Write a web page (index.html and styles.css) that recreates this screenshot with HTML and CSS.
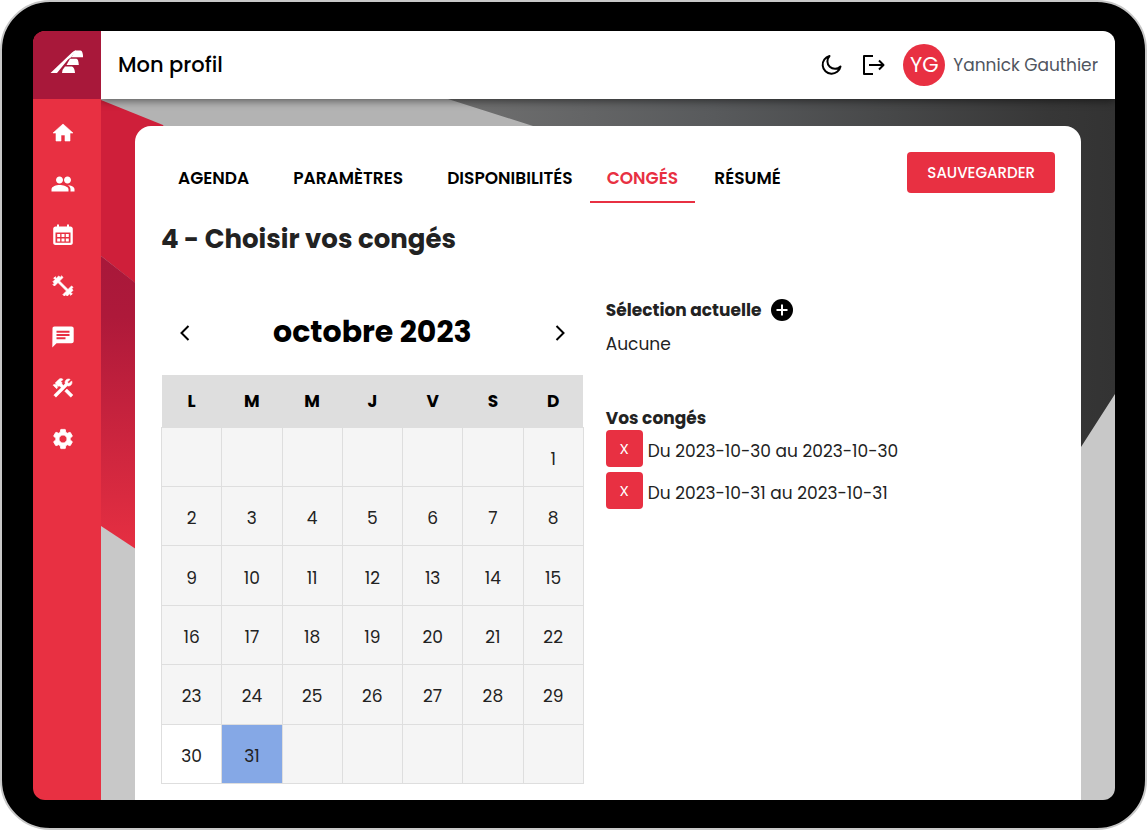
FILE: index.html
```html
<!DOCTYPE html>
<html lang="fr">
<head>
  <meta charset="UTF-8">
  <meta name="viewport" content="width=device-width, initial-scale=1.0">
  <title>Mon profil</title>
  <link rel="stylesheet" href="styles.css">
</head>
<body>
  <div class="tablet">
    <div class="screen">
      <nav class="sidebar" aria-label="Navigation">
        <a href="#" class="logo" aria-label="Accueil">
          <svg width="34" height="26" viewBox="0 0 34 26" fill="#fff">
            <path d="M0.500 24 L22 3.500 Q24 1.500 26 1.500 L21.500 8 L18 10.500 L7 24 Z"/>
            <path d="M25 1.500 H30.500 Q33 2 33 8.300 H21.500 Z"/>
            <path d="M20 9.700 H26.500 Q28.500 10.200 28.800 16 H16.500 Z"/>
            <path d="M15 17.400 H22 Q24.500 18 25 24 H12 Q12 20.500 15 17.400 Z"/>
          </svg>
        </a>
        <a href="#" class="nav-link" aria-label="Tableau de bord">
          <svg viewBox="0 0 24 24"><path d="M10 20v-6h4v6h5v-8h3L12 3 2 12h3v8z" stroke="#fff" stroke-width="0.600"/></svg>
        </a>
        <a href="#" class="nav-link" aria-label="Clients">
          <svg viewBox="0 0 24 24"><path d="M16.500 13.100C18.300 14.200 19.500 15.500 19.500 17.200V19.500H23.500V17.200c0-2.400-4-3.800-7-4.100zM8.500 11.500c2 0 3.500-1.600 3.500-3.500s-1.500-3.500-3.500-3.500S5 6.100 5 8s1.500 3.500 3.500 3.500zM16.500 11.500c2 0 3.500-1.600 3.500-3.500s-1.500-3.500-3.500-3.500S13 6.100 13 8s1.500 3.500 3.500 3.500zM8.500 13C5.500 13 .5 14.400.5 17.200v2.300H17.500v-2.300C17.500 14.400 11.500 13 8.500 13z"/></svg>
        </a>
        <a href="#" class="nav-link" aria-label="Calendrier">
          <svg viewBox="0 0 24 24"><path fill-rule="evenodd" d="M6 1.500h2V3.500h8V1.500h2V3.500h1.500c1.300 0 2.300 1 2.300 2.300v14c0 1.300-1 2.300-2.300 2.300h-15c-1.300 0-2.300-1-2.300-2.300v-14c0-1.300 1-2.300 2.300-2.300H6zM4.500 9.500v10.300h15V9.500z"/><path d="M6.200 11h3v3h-3zM10.500 11h3v3h-3zM14.800 11h3v3h-3zM6.200 15.600h3v3h-3zM10.500 15.600h3v3h-3zM14.800 15.600h3v3h-3z"/></svg>
        </a>
        <a href="#" class="nav-link" aria-label="Entraînements">
          <svg viewBox="0 0 24 24"><path d="M20.570 14.860L22 13.430 20.570 12 17 15.570 8.430 7 12 3.430 10.570 2 9.140 3.430 7.710 2 5.570 4.140 4.140 2.710 2.710 4.140l1.430 1.430L2 7.710l1.430 1.430L2 10.570 3.430 12 7 8.430 15.570 17 12 20.570 13.430 22l1.430-1.430L16.290 22l2.140-2.140 1.430 1.430 1.430-1.430-1.430-1.430L22 16.290z" stroke="#fff" stroke-width="0.900" stroke-linejoin="round"/></svg>
        </a>
        <a href="#" class="nav-link" aria-label="Messages">
          <svg viewBox="0 0 24 24"><path d="M20.500 1.500h-17c-1.300 0-2 .9-2 2L1.300 22.500l4.200-4.200h15c1.300 0 2.200-.9 2.200-2V3.500c0-1.100-.9-2-2.200-2zM5.500 9h13v2H5.500V9zm9 5.200h-9v-2h9v2zm4-6.400H5.500V5.800h13v2z"/></svg>
        </a>
        <a href="#" class="nav-link" aria-label="Outils">
          <svg viewBox="0 0 24 24" stroke="#fff" stroke-width="0.600"><path d="M13.783 15.172l2.121-2.121 5.996 5.996-2.121 2.121zM17.500 10c1.930 0 3.500-1.570 3.500-3.500 0-.58-.16-1.120-.41-1.600l-2.700 2.700-1.490-1.490 2.700-2.700c-.48-.25-1.020-.41-1.600-.41C15.570 3 14 4.570 14 6.500c0 .41.08.8.21 1.160l-1.850 1.850-1.780-1.780.71-.71-1.410-1.410L12 3.490c-1.170-1.170-3.070-1.170-4.240 0L4.220 7.030l1.410 1.410H2.810l-.71.71 3.540 3.540.71-.71V9.150l1.410 1.410.71-.71 1.780 1.780-7.410 7.410 2.120 2.120L16.340 9.790c.36.13.75.21 1.160.21z"/></svg>
        </a>
        <a href="#" class="nav-link" aria-label="Réglages">
          <svg viewBox="0 0 24 24" stroke="#fff" stroke-width="0.800"><path d="M19.140 12.940c.04-.3.06-.61.06-.94 0-.32-.02-.64-.07-.94l2.030-1.580c.18-.14.23-.41.12-.61l-1.920-3.320c-.12-.22-.37-.29-.59-.22l-2.390.96c-.5-.38-1.030-.7-1.620-.94l-.36-2.540c-.04-.24-.24-.41-.48-.41h-3.840c-.24 0-.43.17-.47.41l-.36 2.540c-.59.24-1.130.57-1.620.94l-2.390-.96c-.22-.08-.47 0-.59.22L2.740 8.870c-.12.21-.08.47.12.61l2.030 1.580c-.05.3-.09.63-.09.94s.02.64.07.94l-2.030 1.580c-.18.14-.23.41-.12.61l1.920 3.320c.12.22.37.29.59.22l2.390-.96c.5.38 1.030.7 1.620.94l.36 2.540c.05.24.24.41.48.41h3.840c.24 0 .44-.17.47-.41l.36-2.540c.59-.24 1.130-.56 1.620-.94l2.390.96c.22.08.47 0 .59-.22l1.920-3.320c.12-.22.07-.47-.12-.61l-2.010-1.580zM12 16c-2.200 0-4-1.800-4-4s1.800-4 4-4 4 1.800 4 4-1.800 4-4 4z"/></svg>
        </a>
      </nav>

      <div class="page">
        <header class="topbar">
          <h1>Mon profil</h1>
          <div class="user">
            <button type="button" class="icon-btn" aria-label="Mode sombre">
              <svg width="24" height="24" viewBox="0 0 24 24" fill="none" stroke="#000" stroke-width="2" stroke-linejoin="round"><path d="M10.500 3a9 9 0 1 0 11 10.500A7.200 7.200 0 0 1 10.500 3z"/></svg>
            </button>
            <button type="button" class="icon-btn" aria-label="Se déconnecter">
              <svg width="24" height="24" viewBox="0 0 24 24" fill="none" stroke="#000" stroke-width="2" stroke-linejoin="round"><path d="M12 3H3v18h9M8 12h14M18 7.500l4.500 4.500-4.500 4.500"/></svg>
            </button>
            <span class="avatar">YG</span>
            <span class="user-name">Yannick Gauthier</span>
          </div>
        </header>

        <main class="content">
          <svg class="backdrop" viewBox="0 0 1014 701" preserveAspectRatio="none" aria-hidden="true">
            <defs>
              <linearGradient id="dark" x1="0" y1="0" x2="1" y2="0">
                <stop offset="0" stop-color="#707070"/>
                <stop offset="0.400" stop-color="#585a5c"/>
                <stop offset="0.900" stop-color="#373737"/>
                <stop offset="1" stop-color="#333"/>
              </linearGradient>
              <linearGradient id="red" x1="0" y1="0" x2="0" y2="1">
                <stop offset="0" stop-color="#a8183a"/>
                <stop offset="0.200" stop-color="#ae193a"/>
                <stop offset="1" stop-color="#e83042"/>
              </linearGradient>
            </defs>
            <path fill="#c8c8c8" d="M0 0H1014V701H0z"/>
            <path fill="#b3b3b3" d="M0 0H600V60H0z"/>
            <path fill="url(#dark)" d="M347 0H1014V295L980 348L700 348L432 27z"/>
            <path fill="#cf1f3a" d="M0 1L62 26L80 60V220L0 157z"/>
            <path fill="url(#red)" d="M0 157L50 196V460L0 427z"/>
          </svg>

          <section class="card">
            <div class="card-head">
              <nav class="tabs" aria-label="Profil">
                <a href="#" class="tab spaced">AGENDA</a>
                <a href="#" class="tab spaced">PARAMÈTRES</a>
                <a href="#" class="tab">DISPONIBILITÉS</a>
                <a href="#" class="tab active">CONGÉS</a>
                <a href="#" class="tab">RÉSUMÉ</a>
              </nav>
              <button type="button" class="save">SAUVEGARDER</button>
            </div>
            <h2>4 - Choisir vos congés</h2>

            <div class="columns">
              <div class="calendar">
                <div class="month">
                  <button type="button" class="icon-btn" aria-label="Mois précédent">
                    <svg width="24" height="24" viewBox="0 0 24 24" fill="none" stroke="#000" stroke-width="2"><path d="M15.500 5l-7 7 7 7"/></svg>
                  </button>
                  <h3>octobre 2023</h3>
                  <button type="button" class="icon-btn" aria-label="Mois suivant">
                    <svg width="24" height="24" viewBox="0 0 24 24" fill="none" stroke="#000" stroke-width="2"><path d="M8.500 5l7 7-7 7"/></svg>
                  </button>
                </div>
                <table>
                  <thead>
                    <tr><th>L</th><th>M</th><th>M</th><th>J</th><th>V</th><th>S</th><th>D</th></tr>
                  </thead>
                  <tbody>
                    <tr><td></td><td></td><td></td><td></td><td></td><td></td><td>1</td></tr>
                    <tr><td>2</td><td>3</td><td>4</td><td>5</td><td>6</td><td>7</td><td>8</td></tr>
                    <tr><td>9</td><td>10</td><td>11</td><td>12</td><td>13</td><td>14</td><td>15</td></tr>
                    <tr><td>16</td><td>17</td><td>18</td><td>19</td><td>20</td><td>21</td><td>22</td></tr>
                    <tr><td>23</td><td>24</td><td>25</td><td>26</td><td>27</td><td>28</td><td>29</td></tr>
                    <tr><td class="open">30</td><td class="today">31</td><td></td><td></td><td></td><td></td><td></td></tr>
                  </tbody>
                </table>
              </div>

              <div class="details">
                <div class="selection">
                  <h4>Sélection actuelle</h4>
                  <button type="button" class="icon-btn" aria-label="Ajouter">
                    <svg width="24" height="24" viewBox="0 0 24 24"><circle cx="12" cy="12" r="11"/><path d="M12 6.500v11M6.500 12h11" stroke="#fff" stroke-width="2"/></svg>
                  </button>
                </div>
                <p class="none">Aucune</p>
                <h4>Vos congés</h4>
                <ul class="leaves">
                  <li><button type="button" class="remove" aria-label="Supprimer">X</button><span>Du 2023-10-30 au 2023-10-30</span></li>
                  <li><button type="button" class="remove" aria-label="Supprimer">X</button><span>Du 2023-10-31 au 2023-10-31</span></li>
                </ul>
              </div>
            </div>
          </section>
        </main>
      </div>
    </div>
  </div>
</body>
</html>
```
FILE: styles.css
```css
* {
    box-sizing: border-box;
}

body {
    margin: 0;
    background-color: #fff;
    color: #222;
    font-family: Poppins, Inter, sans-serif;
    font-size: 17px;
    line-height: 24px;
}

h1, h2, h3, h4, p, ul {
    margin: 0;
    padding: 0;
}

a {
    color: inherit;
    text-decoration: none;
}

button {
    font-family: inherit;
    border: none;
    cursor: pointer;
}

.tablet {
    height: 100vh;
    padding: 29px 30px 28px 31px;
    border: 2px solid #c8c8c8;
    border-radius: 50px;
    background-color: #000;
}

.screen {
    display: flex;
    height: 100%;
    border-radius: 12px;
    overflow: hidden;
}

.sidebar {
    flex: none;
    width: 68px;
    background-color: #e83042;
}

.logo {
    display: flex;
    align-items: center;
    justify-content: center;
    height: 68px;
    margin-bottom: 8px;
    padding-bottom: 6px;
    background-color: #a8183a;
}

.nav-link {
    display: flex;
    align-items: center;
    justify-content: center;
    height: 51px;
    padding-right: 8px;
}

.nav-link svg {
    width: 24px;
    height: 24px;
    fill: #fff;
}

.page {
    flex: 1;
    display: flex;
    flex-direction: column;
    min-width: 0;
}

.topbar {
    position: relative;
    z-index: 1;
    display: flex;
    align-items: center;
    justify-content: space-between;
    height: 68px;
    flex: none;
    padding: 0 17px;
    background-color: #fff;
    box-shadow: 0 2px 8px rgba(0, 0, 0, 0.5);
    clip-path: inset(0 0 -12px 0);
}

.topbar h1 {
    color: #000;
    font-size: 21px;
    font-weight: 500;
}

.user {
    display: flex;
    align-items: center;
}

.icon-btn {
    display: flex;
    padding: 0;
    background: none;
}

.user .icon-btn {
    margin-right: 18px;
}

.avatar {
    display: flex;
    align-items: center;
    justify-content: center;
    width: 42px;
    height: 42px;
    margin-right: 8px;
    border-radius: 50%;
    background-color: #e83042;
    color: #fff;
    font-size: 21px;
}

.user-name {
    color: #505560;
}

.content {
    position: relative;
    flex: 1;
    min-height: 0;
    padding: 27px 34px 0;
    overflow: hidden;
}

.backdrop {
    position: absolute;
    inset: 0;
    width: 100%;
    height: 100%;
}

.card {
    position: relative;
    height: 100%;
    padding: 26px 26px 0;
    border-radius: 16px 16px 0 0;
    background-color: #fff;
}

.card-head {
    display: flex;
    align-items: flex-start;
    justify-content: space-between;
}

.tabs {
    display: flex;
}

.tab {
    min-width: 105px;
    padding: 14px 17px 11px;
    border-bottom: 2px solid transparent;
    color: #000;
    font-weight: 600;
    text-align: center;
}

.tab.spaced {
    margin-right: 10px;
}

.tab.active {
    border-bottom-color: #e83042;
    color: #e83042;
}

.save {
    height: 41px;
    padding: 0 20px;
    border-radius: 4px;
    background-color: #e83042;
    color: #fff;
    font-size: 15px;
    font-weight: 500;
}

h2 {
    padding-top: 20px;
    font-size: 26px;
    line-height: 32px;
}

.columns {
    display: flex;
    gap: 22px;
    padding-top: 36px;
}

.calendar {
    flex: 16 1 0;
    min-width: 0;
}

.month {
    display: flex;
    align-items: center;
    justify-content: space-between;
    height: 84px;
    padding: 0 12px;
}

h3 {
    padding-bottom: 2px;
    color: #000;
    font-size: 30px;
    line-height: 40px;
}

table {
    width: 100%;
    height: 409px;
    border-collapse: collapse;
    table-layout: fixed;
}

th {
    height: 52px;
    padding: 0;
    background-color: #dedede;
    color: #000;
}

td {
    padding: 4px 0 0;
    border: 1px solid #dedede;
    background-color: #f5f5f5;
    text-align: center;
}

.open {
    background-color: #fff;
}

.today {
    background-color: #85a8e6;
}

.details {
    flex: 17 1 0;
    min-width: 0;
    padding-top: 7px;
}

h4 {
    font-size: 17px;
    line-height: 24px;
}

.selection {
    display: flex;
    gap: 9px;
}

.none {
    padding: 10px 0 50px;
}

.leaves {
    list-style: none;
}

.leaves li {
    display: flex;
    align-items: center;
    gap: 5px;
    margin-bottom: 5px;
}

.leaves span {
    padding-top: 4px;
}

.remove {
    width: 37px;
    height: 37px;
    padding: 0;
    border-radius: 4px;
    background-color: #e83042;
    color: #fff;
    font-size: 15px;
}
```
